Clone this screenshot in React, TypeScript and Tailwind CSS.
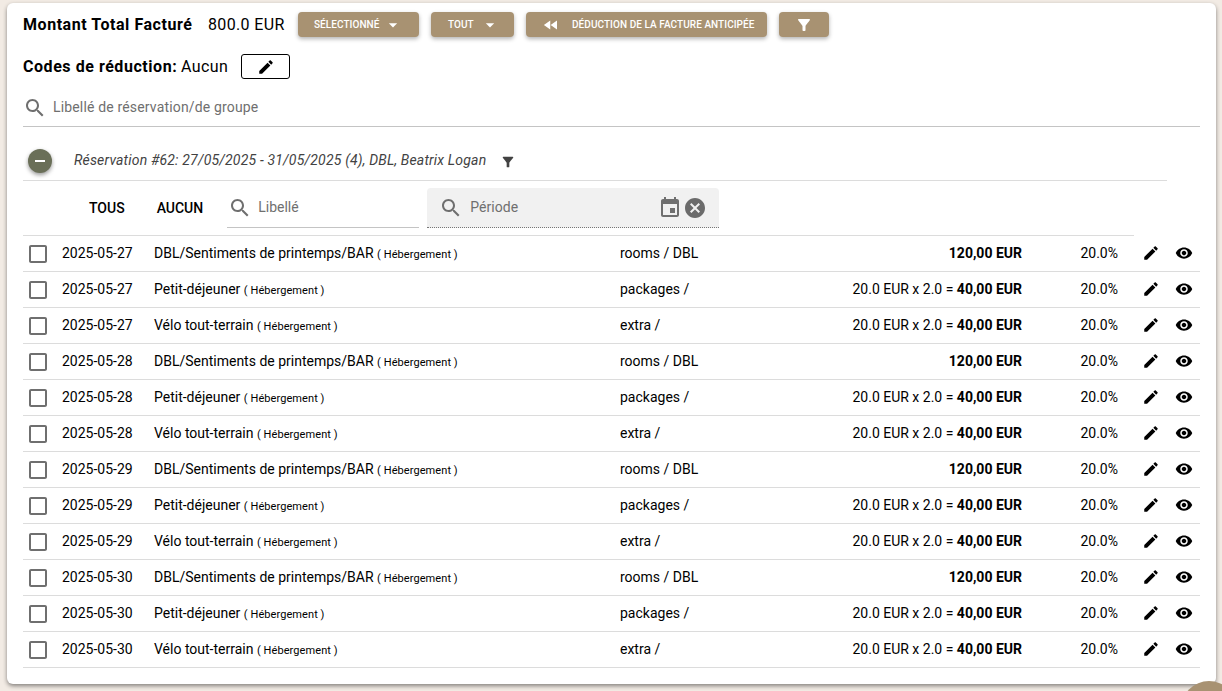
const PATHS = {
  edit: "M3 17.25V21h3.75L17.81 9.94l-3.75-3.75L3 17.25zM20.71 7.04c.39-.39.39-1.02 0-1.41l-2.34-2.34c-.39-.39-1.02-.39-1.41 0l-1.83 1.83 3.75 3.75 1.83-1.83z",
  eye: "M12 4.5C7 4.5 2.73 7.61 1 12c1.73 4.39 6 7.5 11 7.5s9.27-3.11 11-7.5c-1.73-4.39-6-7.5-11-7.5zM12 17c-2.76 0-5-2.24-5-5s2.24-5 5-5 5 2.24 5 5-2.24 5-5 5zm0-8c-1.66 0-3 1.34-3 3s1.34 3 3 3 3-1.34 3-3-1.34-3-3-3z",
  search: "M15.5 14h-.79l-.28-.27C15.41 12.59 16 11.11 16 9.5 16 5.91 13.09 3 9.5 3S3 5.91 3 9.5 5.91 16 9.5 16c1.61 0 3.09-.59 4.23-1.57l.27.28v.79l5 4.99L20.49 19l-4.99-5zm-6 0C7.01 14 5 11.99 5 9.5S7.01 5 9.5 5 14 7.01 14 9.5 11.99 14 9.5 14z",
  filter: "M4.25 5.61C6.27 8.2 10 13 10 13v6c0 .55.45 1 1 1h2c.55 0 1-.45 1-1v-6s3.72-4.8 5.74-7.39c.51-.66.04-1.61-.79-1.61H5.04c-.83 0-1.3.95-.79 1.61z",
  event: "M17 12h-5v5h5v-5zM16 1v2H8V1H6v2H5c-1.11 0-1.99.9-1.99 2L3 19c0 1.1.89 2 2 2h14c1.1 0 2-.9 2-2V5c0-1.1-.9-2-2-2h-1V1h-2zm3 18H5V8h14v11z",
  cancel: "M12 2C6.47 2 2 6.47 2 12s4.47 10 10 10 10-4.47 10-10S17.53 2 12 2zm5 13.59L15.59 17 12 13.41 8.41 17 7 15.59 10.59 12 7 8.41 8.41 7 12 10.59 15.59 7 17 8.41 13.41 12 17 15.59z",
  rewind: "M11 18V6l-8.5 6 8.5 6zm.5-6l8.5 6V6l-8.5 6z",
  drop: "M7 10l5 5 5-5z",
  box: "M19 5v14H5V5h14m0-2H5c-1.1 0-2 .9-2 2v14c0 1.1.9 2 2 2h14c1.1 0 2-.9 2-2V5c0-1.1-.9-2-2-2z",
};

function Icon({ d, className }: { d: string; className: string }) {
  return (
    <svg viewBox="0 0 24 24" fill="currentColor" className={className}>
      <path d={d} />
    </svg>
  );
}

const btn =
  "flex h-[25px] items-center rounded-[4px] bg-[#a89272] text-[10px] font-medium uppercase tracking-[0.06px] text-white shadow-[0_2px_4px_rgba(0,0,0,0.3)]";

const items = [
  { label: "DBL/Sentiments de printemps/BAR", cat: "rooms / DBL", calc: "", total: "120,00 EUR" },
  { label: "Petit-déjeuner", cat: "packages /", calc: "20.0 EUR x 2.0 = ", total: "40,00 EUR" },
  { label: "Vélo tout-terrain", cat: "extra /", calc: "20.0 EUR x 2.0 = ", total: "40,00 EUR" },
];
const days = ["2025-05-27", "2025-05-28", "2025-05-29", "2025-05-30"];

function Row({ date, item }: { date: string; item: (typeof items)[number] }) {
  return (
    <div className="grid h-9 grid-cols-[39px_92px_466px_150px_252px_96px_1fr] items-center border-b border-[#dcdcdc] text-[14px] text-black">
      <Icon d={PATHS.box} className="ml-[3px] size-6 text-[#6f6f6f]" />
      <span>{date}</span>
      <span>
        {item.label} <span className="text-[11px] tracking-[0.08px]">( Hébergement )</span>
      </span>
      <span>{item.cat}</span>
      <span className="text-right">
        {item.calc}
        <b className="font-bold">{item.total}</b>
      </span>
      <span className="text-right">20.0%</span>
      <div className="-mt-[2px] flex items-center pl-6">
        <Icon d={PATHS.edit} className="size-[18px]" />
        <Icon d={PATHS.eye} className="ml-[15px] size-[18px]" />
      </div>
    </div>
  );
}

export default function App() {
  return (
    <div className="relative h-[691px] overflow-hidden bg-[#f2ebe4] font-['Roboto',sans-serif]">
      <div className="ml-[7px] mt-[3px] h-[681px] w-[1209px] rounded-[6px] bg-white px-4 shadow-[0_2px_4px_rgba(0,0,0,0.45)]">
        {/* totals + actions */}
        <div className="flex h-[25px] translate-y-[9px] items-center whitespace-nowrap text-[16px] text-black">
          <b className="w-[169px] font-bold tracking-[0.55px]">Montant Total Facturé</b>
          <span className="ml-4 w-[90px] tracking-[0.35px]">800.0 EUR</span>
          <button className={`${btn} w-[121px] pl-4`}>
            Sélectionné
            <Icon d={PATHS.drop} className="ml-1 size-5" />
          </button>
          <button className={`${btn} ml-3 w-[83px] pl-[17px]`}>
            Tout
            <Icon d={PATHS.drop} className="ml-[6px] size-5" />
          </button>
          <button className={`${btn} ml-3 w-[241px] pl-4`}>
            <Icon d={PATHS.rewind} className="mr-3 size-[18px]" />
            Déduction de la facture anticipée
          </button>
          <button className={`${btn} ml-3 w-[50px] justify-center`}>
            <Icon d={PATHS.filter} className="size-[18px]" />
          </button>
        </div>

        <div className="mt-[17px] flex h-[25px] translate-y-[9px] items-center whitespace-nowrap text-[16px] text-black">
          <b className="w-[154px] font-bold tracking-[0.55px]">Codes de réduction:</b>
          <span className="ml-1 w-[47px] tracking-[0.4px]">Aucun</span>
          <button className="ml-[13px] flex h-[25px] w-[49px] items-center justify-center rounded-[3px] border border-black">
            <Icon d={PATHS.edit} className="size-[18px]" />
          </button>
        </div>

        <div className="mt-[10px] flex h-[38px] translate-y-[9px] items-center border-b border-[#c4c4c4] text-[14px] tracking-[0.16px] text-[#6f6f6f]">
          <Icon d={PATHS.search} className="size-6" />
          <span className="ml-[6px]">Libellé de réservation/de groupe</span>
        </div>

        {/* reservation group */}
        <div className="mr-[33px] mt-[9px] flex h-[54px] items-center border-b border-[#dcdcdc] pt-[14px] text-[14px] italic tracking-[0.18px] text-[#424242]">
          <span className="ml-[5px] flex size-6 items-center justify-center rounded-full bg-[#6a6f58] shadow-[0_2px_4px_rgba(0,0,0,0.4)]">
            <span className="h-[2px] w-[10px] bg-white" />
          </span>
          <span className="ml-[22px]">Réservation #62: 27/05/2025 - 31/05/2025 (4), DBL, Beatrix Logan</span>
          <Icon d={PATHS.filter} className="ml-[14px] mt-[3px] size-[16px] text-[#424242]" />
        </div>

        <div className="mr-[66px] flex h-[55px] items-start border-b border-[#dcdcdc] pt-[7px] text-[14px]">
          <span className="ml-[66px] mt-[10px] font-medium text-black">TOUS</span>
          <span className="ml-[32px] mt-[10px] font-medium text-black">AUCUN</span>
          <div className="ml-[24px] flex h-[33px] w-[192px] translate-y-[7px] items-center border-b border-[#c4c4c4] pb-[7px] text-[#6f6f6f]">
            <Icon d={PATHS.search} className="ml-[1px] size-6" />
            <span className="ml-[6px]">Libellé</span>
          </div>
          <div className="ml-2 flex h-10 w-[292px] items-center rounded-t-[4px] border-b border-dotted border-[#777] bg-[#f1f1f1] text-[#6f6f6f]">
            <Icon d={PATHS.search} className="ml-[12px] size-6" />
            <span className="ml-[7px] tracking-[0.05px]">Période</span>
            <Icon d={PATHS.event} className="ml-auto size-6" />
            <Icon d={PATHS.cancel} className="ml-[1px] mr-[12px] size-6 text-[#6b6b6b]" />
          </div>
        </div>

        {days.map((d) =>
          items.map((item) => <Row key={d + item.label} date={d} item={item} />)
        )}
      </div>

      {/* floating button, mostly cut off by the window */}
      <div className="absolute left-[1181px] top-[681px] size-14 rounded-full bg-[#a89272]" />
    </div>
  );
}
